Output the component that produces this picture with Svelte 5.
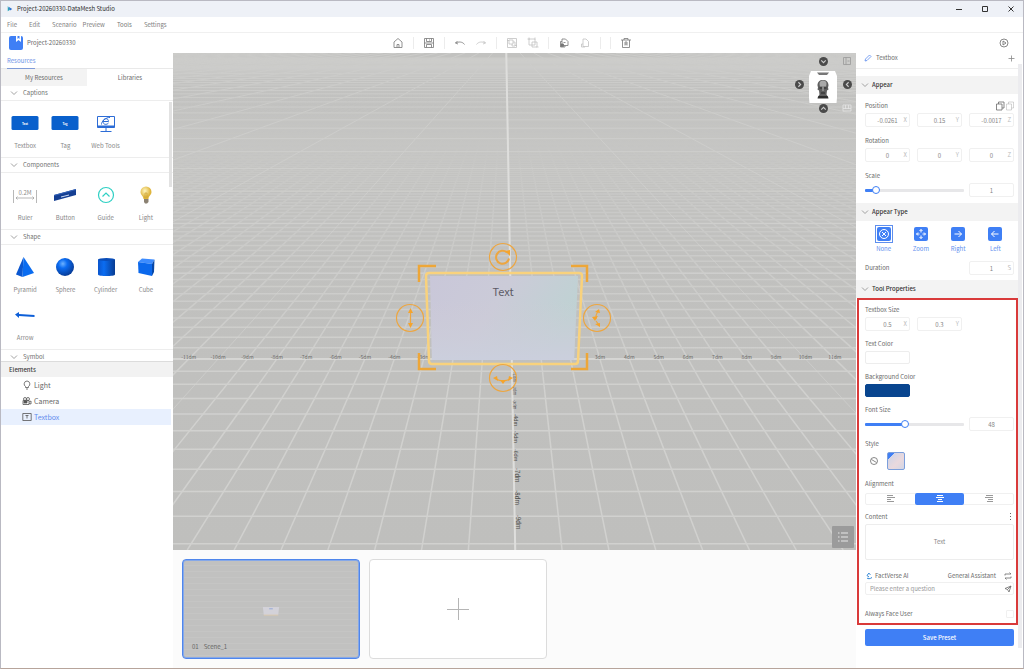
<script>
    const menus = ["File", "Edit", "Scenario", "Preview", "Tools", "Settings"];

    const sections = [
        { name: "Captions", items: ["Textbox", "Tag", "Web Tools"] },
        { name: "Components", items: ["Ruler", "Button", "Guide", "Light"] },
        {
            name: "Shape",
            items: ["Pyramid", "Sphere", "Cylinder", "Cube", "Arrow"],
        },
        { name: "Symbol", items: [] },
    ];

    const tools = [
        { id: "home", title: "Home" },
        { id: "sep" },
        { id: "save", title: "Save" },
        { id: "sep" },
        { id: "undo", title: "Undo" },
        { id: "redo", title: "Redo", off: true },
        { id: "sep" },
        { id: "group", title: "Group", off: true },
        { id: "ungroup", title: "Ungroup", off: true },
        { id: "sep" },
        { id: "copy", title: "Copy" },
        { id: "paste", title: "Paste", off: true },
        { id: "sep" },
        { id: "sep" },
        { id: "trash", title: "Delete" },
    ];

    let s = $state({
        tab: "Libraries",
        element: "Textbox",
        appear: "None",
        align: "center",
        scale: 8,
        font: 40,
        content: "Text",
        face: false,
    });

    // floor grid, everything runs to one vanishing point
    const vx = 333;
    const vy = -15;
    const step = 0.0915;
    const rowY = (n) => vy + 1 / (0.003115 + 0.0001138 * n);
    const colX = (n, y) => vx + (y - vy) * (0.018 + step * n);

    const minorRows = [];
    for (let n = -10; n < 90; n++) minorRows.push(rowY(n));
    const majorRows = [];
    for (let n = 0; n < 420; n += 10) majorRows.push(rowY(n));
    const minorCols = [];
    for (let n = -70; n <= 70; n++) if (n % 10) minorCols.push(n);
    const majorCols = [];
    for (let n = -300; n <= 300; n += 10) majorCols.push(n);

    const xLabels = [];
    for (let n = -11; n <= 11; n++) {
        if (Math.abs(n) > 2) xLabels.push({ n, x: colX(n, 306) });
    }
    const zLabels = [1, 2, 3, 4, 5, 6, 7, 8, 9].map((n) => ({
        n,
        x: colX(0, rowY(-n)) + 1,
        y: rowY(-n) + 6,
        size: n < 4 ? 4 : n < 7 ? 5 : 6,
    }));
</script>

{#snippet Chevron()}
    <svg class="chev" viewBox="0 0 8 8"><path d="M1 2.5 4 5.5 7 2.5" /></svg>
{/snippet}

{#snippet ToolIcon(id)}
    <svg class="line" viewBox="0 0 12 12">
        {#if id === "home"}
            <path d="M2 5 6 1.5 10 5v5.5H2zM5 10.500V7.500h2v3" />
        {:else if id === "save"}
            <path
                d="M1.500 1.500h9v9h-9zM3.500 1.500v3h5v-3M3.500 10.500v-3h5v3M6.500 2.500v1M1.500 6h9"
            />
        {:else if id === "undo"}
            <path d="M3.500 4 1.500 6l2.500 1M1.500 6C4.500 4.500 8.500 4.500 10.500 7.500" />
        {:else if id === "redo"}
            <path d="M8.500 4l2 2-2.500 1M10.500 6C7.500 4.500 3.500 4.500 1.500 7.500" />
        {:else if id === "group"}
            <path
                d="M1.500 1.500h9v9h-9zM3 3h4v4H3zM6 7v2h3V5H7M1 3.500h2M9 8.500h2"
            />
        {:else if id === "ungroup"}
            <path d="M2 2h6v6H2zM5 5h5v5H5zM.5 2h2M2 .5v2M8 .5v2M11.500 10h-2" />
        {:else if id === "copy"}
            <path d="M4 2h3.500l2.500 2.500V8.500H4zM4 4.500H2.500v5.500h4.500V8.500M5.500 5.500h2" />
            <path d="M3 7h2.500v2.500H3z" fill="currentColor" />
        {:else if id === "paste"}
            <path d="M4 2h3l2.500 2.500V9.500H4zM4 7H2.500v3h3.500" />
        {:else if id === "trash"}
            <path
                d="M1 3h10M4 3V1.500h4V3M2.500 3v7.500h7V3M5 5v3.500M7 5v3.500M5 5h2M5 7h2"
            />
        {/if}
    </svg>
{/snippet}

{#snippet Thing(name)}
    <svg class="thing" viewBox="0 0 28 24">
        {#if name === "Textbox" || name === "Tag"}
            <rect x=".5" y="5" width="27" height="14" rx="1.500" fill="#0960cc" />
            <text class="mini" x="14" y="13.500" text-anchor="middle"
                >{name === "Tag" ? "Tag" : "Text"}</text
            >
        {:else if name === "Web Tools"}
            <g fill="none" stroke="#2c6cd6">
                <path d="M5.500 5.500h17v11h-17z" />
                <path d="M5.500 15.500h17" stroke-width="2" />
                <path d="M14 17v3M8.500 20.500h11" />
                <path d="M11 10.500h5.500c0-4-5.500-3.500-5.500 0 0 3.500 4 3.500 5.500 1.500M9.500 13.500C9 11 14 6 18 6.500" />
            </g>
        {:else if name === "Ruler"}
            <g fill="none" stroke="#9a9a9a" stroke-width=".7">
                <path d="M2.500 7v13M25.500 7v13" />
                <path d="M5 15h18M6.500 13.500 5 15l1.500 1.500M21.500 13.500 23 15l-1.500 1.500" />
            </g>
            <text class="ruler" x="14" y="12" text-anchor="middle">0.2M</text>
        {:else if name === "Button"}
            <path d="M3 12 25 6v6L3 18z" fill="#153f93" />
            <path d="M3 12 25 6v1L3 13z" fill="#3463b8" />
            <path d="m10 14 8-2" stroke="#cfdcf4" />
        {:else if name === "Guide"}
            <g fill="none" stroke="#2fd0c4" stroke-width="1.200">
                <circle cx="14" cy="12" r="7.500" />
                <path d="m10.500 13.500 3.500-3.500 3.500 3.500" />
            </g>
        {:else if name === "Light"}
            <defs>
                <radialGradient id="bulb" cx=".4" cy=".35">
                    <stop offset="0" stop-color="#fff6c0" />
                    <stop offset="1" stop-color="#dfb53d" />
                </radialGradient>
            </defs>
            <path
                d="M14 3.500a5.500 5.500 0 0 1 5.500 5.500c0 3-3 4-3 7h-5c0-3-3-4-3-7A5.500 5.500 0 0 1 14 3.500z"
                fill="url(#bulb)"
            />
            <path d="M12 16h4.500v3L15 20.500h-2L12 19z" fill="#8b8172" />
            <path d="M13 15v-5l2 0v5" fill="none" stroke="#c79a2c" stroke-width=".6" />
        {:else if name === "Pyramid"}
            <path d="M12.500 2 5 19.500l6.500 2.500z" fill="#0b57d0" />
            <path d="M12.500 2 11.500 22 23 18z" fill="#0a6cf0" />
        {:else if name === "Sphere"}
            <defs>
                <radialGradient id="ball" cx=".38" cy=".32" r=".7">
                    <stop offset="0" stop-color="#6db2ff" />
                    <stop offset=".35" stop-color="#0b6cf2" />
                    <stop offset="1" stop-color="#073a94" />
                </radialGradient>
            </defs>
            <circle cx="14" cy="12" r="9" fill="url(#ball)" />
        {:else if name === "Cylinder"}
            <defs>
                <linearGradient id="tube">
                    <stop offset="0" stop-color="#0a55cc" />
                    <stop offset=".35" stop-color="#0b6df2" />
                    <stop offset="1" stop-color="#083c92" />
                </linearGradient>
            </defs>
            <path d="M6 4.500v15c0 2 17 2 17 0v-15z" fill="url(#tube)" />
            <ellipse cx="14.500" cy="4.500" rx="8.500" ry="1.500" fill="#0a4db8" />
        {:else if name === "Cube"}
            <path d="M6 7 10 3.500 22.500 4.500 20 9z" fill="#3d8cff" />
            <path d="M6 7 20 9v12L6.500 18z" fill="#0b68ec" />
            <path d="M20 9 22.500 4.500 22 17l-2 4z" fill="#0747a8" />
        {:else if name === "Arrow"}
            <path d="m4 11.500 4-2.500v2l15.500 1v2L8 13v2z" fill="#0d5fd8" />
        {/if}
    </svg>
{/snippet}

{#snippet Field(label, value, unit)}
    <label class="field">
        <input type="text" {value} aria-label={label} />
        {#if unit}<span>{unit}</span>{/if}
    </label>
{/snippet}

<div class="window">
    <header class="titlebar">
        <svg class="logo" viewBox="0 0 8 8">
            <path d="M1 0v7l3-2z" fill="#2aa5b8" />
            <path d="m2 1 5 3-3 2z" fill="#2c6fd0" />
        </svg>
        <h1>Project-20260330-DataMesh Studio</h1>
        <div class="winbtns">
            <button aria-label="Minimize"
                ><svg viewBox="0 0 8 8"><path d="M1 4.500h6" /></svg></button
            >
            <button aria-label="Maximize"
                ><svg viewBox="0 0 8 8"><path d="M1.500 1.500h5v5h-5z" /></svg
                ></button
            >
            <button aria-label="Close"
                ><svg viewBox="0 0 8 8"><path d="m1.500 1.500 5 5m0-5-5 5" /></svg
                ></button
            >
        </div>
    </header>

    <nav class="menubar">
        {#each menus as m}
            <button class={m.toLowerCase()}>{m}</button>
        {/each}
    </nav>

    <div class="toolbar">
        <div class="project">
            <svg viewBox="0 0 14 14">
                <rect width="14" height="14" rx="2" fill="#3f7ff5" />
                <path d="M7 0v6l2.500-2L12 6V0z" fill="#fff" />
                <path d="M8.500 0v3l1-1 1 1V0z" fill="#3f7ff5" />
            </svg>
            <span>Project-20260330</span>
        </div>
        <div class="tools">
            {#each tools as t}
                {#if t.id === "sep"}
                    <i></i>
                {:else}
                    <button class:off={t.off} aria-label={t.title}
                        >{@render ToolIcon(t.id)}</button
                    >
                {/if}
            {/each}
        </div>
        <button class="play" aria-label="Play">
            <svg class="line" viewBox="0 0 12 12">
                <circle cx="6" cy="6" r="4" />
                <path d="M5 4v4l3-2z" />
            </svg>
        </button>
    </div>

    <div class="body">
        <aside class="left">
            <section class="resources">
                <h2><span>Resources</span></h2>
                <div class="tabs">
                    {#each ["My Resources", "Libraries"] as t}
                        <button
                            class:on={s.tab === t}
                            onclick={() => (s.tab = t)}>{t}</button
                        >
                    {/each}
                </div>
                <div class="list">
                    {#each sections as sec}
                        <h3>{@render Chevron()}{sec.name}</h3>
                        {#if sec.items.length}
                            <ul>
                                {#each sec.items as name}
                                    <li>{@render Thing(name)}{name}</li>
                                {/each}
                            </ul>
                        {/if}
                    {/each}
                    <div class="thumb"></div>
                </div>
            </section>
            <section class="elements">
                <h2>Elements</h2>
                {#each ["Light", "Camera", "Textbox"] as name}
                    <button
                        class:on={s.element === name}
                        onclick={() => (s.element = name)}
                    >
                        <svg class="line" viewBox="0 0 10 10">
                            {#if name === "Light"}
                                <path
                                    d="M5 1a3 3 0 0 1 1.500 5.500v1h-3v-1A3 3 0 0 1 5 1zM4 9h2"
                                />
                            {:else if name === "Camera"}
                                <path d="M1 4.500h6v4H1zM7 6l2-1v3L7 7.500" />
                                <circle cx="3" cy="3" r="1.500" />
                                <circle cx="6" cy="3" r="1.500" />
                                <path d="M2 5h3v2H2z" fill="currentColor" />
                            {:else}
                                <path d="M.8 1.500h8.400v7H.8zM3.500 3.500h3M5 3.500v3" />
                            {/if}
                        </svg>
                        {name}
                    </button>
                {/each}
            </section>
        </aside>

        <main>
            <div class="stage">
                <svg
                    class="scene"
                    viewBox="0 0 683 497"
                    preserveAspectRatio="xMidYMid slice"
                >
                    <defs>
                        <linearGradient id="fade" x2="0" y2="1">
                            <stop offset="0.080" stop-color="#000" />
                            <stop offset="0.250" stop-color="#777" />
                            <stop offset="0.500" stop-color="#bbb" />
                            <stop offset="0.700" stop-color="#fff" />
                        </linearGradient>
                        <mask id="far"
                            ><rect width="683" height="497" fill="url(#fade)" /></mask
                        >
                        <linearGradient id="sky" x2="0" y2="1">
                            <stop offset="0" stop-color="#c2c2c0" />
                            <stop offset="1" stop-color="#bfbfbd" />
                        </linearGradient>
                        <linearGradient id="glass" x2="1" y2="0.350">
                            <stop offset="0" stop-color="#c9c7d9" />
                            <stop offset=".5" stop-color="#cbcbd8" />
                            <stop offset="1" stop-color="#bfd2d3" />
                        </linearGradient>
                        <linearGradient id="glow" x2="0" y2="1">
                            <stop offset=".3" stop-color="#cfcbd6" stop-opacity="0" />
                            <stop offset="1" stop-color="#cbcfdd" />
                        </linearGradient>
                    </defs>
                    <rect width="683" height="497" fill="url(#sky)" />
                    <g class="grid" mask="url(#far)">
                        {#each minorRows as y}
                            <path d="M0 {y}H683" />
                        {/each}
                        {#each minorCols as n}
                            <path d="M{colX(n, 0)} 0L{colX(n, 497)} 497" />
                        {/each}
                    </g>
                    <g class="grid major">
                        {#each majorRows as y}
                            <path d="M0 {y}H683" />
                        {/each}
                        {#each majorCols as n}
                            <path d="M{colX(n, 0)} 0L{colX(n, 497)} 497" />
                        {/each}
                    </g>
                    <path class="axis" d="M0 306H683" />
                    <path class="axis z" d="M{colX(0, 0)} 0L{colX(0, 497)} 497" />

                    {#each xLabels as l}
                        <text class="tick" x={l.x} y="306" text-anchor="middle"
                            >{l.n}dm</text
                        >
                    {/each}
                    {#each zLabels as l}
                        <text
                            class="tick z"
                            font-size={l.size}
                            transform="translate({l.x} {l.y}) rotate(90)"
                            text-anchor="middle">-{l.n}dm</text
                        >
                    {/each}

                    <path d="M257 223h148l-4 84H259z" fill="url(#glass)" />
                    <path d="M257 223h148l-4 84H259z" fill="url(#glow)" />
                    <path
                        class="frame"
                        d="M256 220h150q3 0 3 3l-4 85q0 3-3 3H259q-3 0-3-3l-3-85q0-3 3-3z"
                    />
                    <text class="label" x="330" y="243" text-anchor="middle"
                        >Text</text
                    >
                    <path
                        class="corner"
                        d="M246 229v-16h17M398 213h16v16M414 300v16h-16M263 316h-17v-16"
                    />
                    <g class="handle">
                        <circle cx="330" cy="204" r="13.500" />
                        <path
                            class="thick"
                            d="M334 199.500a6.500 6.500 0 1 0 2 6"
                        />
                        <path class="tip" d="m332 198 5-1v6z" />
                        <circle cx="237" cy="265" r="13.500" />
                        <path d="M237.500 257v16" />
                        <path class="tip" d="m235 260 2.500-5 2.500 5zM235 270l2.500 5 2.500-5z" />
                        <circle cx="424" cy="265" r="13.500" />
                        <path d="M425 258c-2 3-2.500 5-2 8M423 268l3 4" />
                        <path class="tip" d="m422 259 4-3 1 4zM419 264l6-1-3 5zM422 271l5-1 0 4z" />
                        <circle cx="330" cy="325" r="13.500" />
                        <path d="M323 326c4 2.500 10 2.500 14 0" />
                        <path class="tip" d="m320 325 4-2 1 5zM340 325l-4-2-1 5zM327 327h6l-3 4z" />
                    </g>
                </svg>

                <div class="gizmo">
                    <button class="dot top" aria-label="View from top">
                        <svg viewBox="0 0 8 8"><path d="m2 3 2 2 2-2" /></svg>
                    </button>
                    <button class="flat" aria-label="Perspective">
                        <svg viewBox="0 0 10 10"
                            ><path d="M1.500 1.500h7v7h-7zM4 1.500v7M5.500 5h2" /></svg
                        >
                    </button>
                    <button class="dot" aria-label="View from left">
                        <svg viewBox="0 0 8 8"><path d="m3 2 2 2-2 2" /></svg>
                    </button>
                    <svg class="cube" viewBox="0 0 28 32">
                        <path d="M0 5 2 0h24l2 5v22l-.5 5H.5L0 27z" fill="#fff" />
                        <path d="M8 1.500h12l-2 2.500h-8z" fill="#777" />
                        <path
                            d="M14 9c3.500 0 5.500 2 5.500 5.500l-.5 2 .5 2-1.500 1-.5 4 2 3h-11l2-3-.5-4-1.500-1 .5-2-.5-2C8.500 11 10.500 9 14 9z"
                            fill="#5f5f5f"
                        />
                        <path d="M14 9.500c2.500 0 3.500 1.500 3.500 3.500l-.5 2.500h-6l-.5-2.500c0-2 1-3.500 3.500-3.500z" fill="#a9a9a9" />
                        <path d="M10.500 17h2.500M15 17h2.500M12 22h4" stroke="#2b2b2b" />
                        <path d="M13.500 15.500h1v4.500h-1z" fill="#b3b3b3" />
                        <path d="M9.500 25h9l1 2.500h-11z" fill="#2e2e2e" />
                    </svg>
                    <button class="dot" aria-label="View from right">
                        <svg viewBox="0 0 8 8"><path d="M5 2 3 4l2 2" /></svg>
                    </button>
                    <button class="dot bottom" aria-label="View from below">
                        <svg viewBox="0 0 8 8"><path d="m2 5 2-2 2 2" /></svg>
                    </button>
                    <button class="flat light" aria-label="Grid">
                        <svg viewBox="0 0 10 10"
                            ><path d="M1 2h8v6H1zM3.500 2v4M6.500 2v4M1 5.500h8" /></svg
                        >
                    </button>
                </div>

                <button class="listbtn" aria-label="Scene list">
                    <svg viewBox="0 0 12 12"
                        ><path
                            d="M1 2h1.500M4 2h7M1 6h1.500M4 6h7M1 10h1.500M4 10h7"
                        /></svg
                    >
                </button>
            </div>

            <div class="scenes">
                <button class="card on">
                    <svg viewBox="0 0 20 12">
                        <path d="M1 1h18l-1 9H2z" fill="#d3d2d9" />
                        <path d="M2 10h16" stroke="#dcc9ad" />
                        <path d="M8 3h4" stroke="#8fa5d6" />
                    </svg>
                    <span>01</span>
                    <span>Scene_1</span>
                </button>
                <button class="card add" aria-label="Add scene">
                    <svg viewBox="0 0 24 24"
                        ><path d="M12.500 1v22M1 12.500h22" /></svg
                    >
                </button>
            </div>
        </main>

        <aside class="right">
            <div class="props">
                <div class="name">
                    <svg class="line" viewBox="0 0 8 8"
                        ><path d="m1 7 .5-2L5.500 1 7 2.500 3 6.500z" /></svg
                    >
                    <span>Textbox</span>
                    <button aria-label="Add">
                        <svg class="line" viewBox="0 0 8 8"
                            ><path d="M4.500 1.500v6M1.500 4.500h6" /></svg
                        >
                    </button>
                </div>

                <h3>{@render Chevron()}Appear</h3>
                <div class="block">
                    <h4>
                        Position
                        <svg class="line pair" viewBox="0 0 18 10">
                            <path d="M.5 3h5.500v6H.5zM2.500 3V1H8v6H6" />
                            <path d="M10.500 3h5v6h-5zM12.500 3V1h5v6h-2" opacity=".35" />
                        </svg>
                    </h4>
                    <div class="three">
                        {@render Field("Position X", "-0.0261", "X")}
                        {@render Field("Position Y", "0.15", "Y")}
                        {@render Field("Position Z", "-0.0017", "Z")}
                    </div>
                    <h4>Rotation</h4>
                    <div class="three">
                        {@render Field("Rotation X", "0", "X")}
                        {@render Field("Rotation Y", "0", "Y")}
                        {@render Field("Rotation Z", "0", "Z")}
                    </div>
                    <h4><label for="scale">Scale</label></h4>
                    <div class="slide">
                        <input
                            id="scale"
                            type="range"
                            bind:value={s.scale}
                            style="--v: {s.scale}%"
                        />
                        {@render Field("Scale value", "1", "")}
                    </div>
                </div>

                <h3>{@render Chevron()}Appear Type</h3>
                <div class="types">
                    {#each ["None", "Zoom", "Right", "Left"] as t}
                        <button
                            class:on={s.appear === t}
                            onclick={() => (s.appear = t)}
                        >
                            <svg viewBox="0 0 14 14">
                                <rect
                                    width="14"
                                    height="14"
                                    rx="2"
                                    fill="#3f7ff5"
                                    stroke="none"
                                />
                                {#if t === "None"}
                                    <circle cx="7" cy="7" r="4.500" />
                                    <path d="m5 5 4 4M9 5 5 9" />
                                {:else if t === "Zoom"}
                                    <path
                                        d="M7 2.500v3M7 8.500v3M2.500 7h3M8.500 7h3M5.500 4 7 2.500 8.500 4M5.500 10 7 11.500 8.500 10M4 5.500 2.500 7 4 8.500M10 5.500 11.500 7 10 8.500"
                                    />
                                {:else if t === "Right"}
                                    <path d="M3.500 7h7M7.500 4 10.500 7l-3 3" />
                                {:else}
                                    <path d="M10.500 7h-7M6.500 4 3.500 7l3 3" />
                                {/if}
                            </svg>
                            {t}
                        </button>
                    {/each}
                </div>
                <div class="duration">
                    <span>Duration</span>
                    {@render Field("Duration", "1", "S")}
                </div>

                <h3>{@render Chevron()}Tool Properties</h3>
                <div class="block toolprops">
                    <h4>Textbox Size</h4>
                    <div class="three">
                        {@render Field("Textbox width", "0.5", "X")}
                        {@render Field("Textbox height", "0.3", "Y")}
                    </div>
                    <h4>Text Color</h4>
                    <button class="swatch" aria-label="Text color"></button>
                    <h4>Background Color</h4>
                    <button class="swatch navy" aria-label="Background color"
                    ></button>
                    <h4><label for="font">Font Size</label></h4>
                    <div class="slide">
                        <input
                            id="font"
                            type="range"
                            bind:value={s.font}
                            style="--v: {s.font}%"
                        />
                        {@render Field("Font size value", "48", "")}
                    </div>
                    <h4>Style</h4>
                    <div class="styles">
                        <button class="none" aria-label="No style">
                            <svg class="line" viewBox="0 0 10 10">
                                <circle cx="5" cy="5" r="3.500" />
                                <path d="m2.500 3.500 5 3" />
                            </svg>
                        </button>
                        <button class="pearl" aria-label="Pearl style"></button>
                    </div>
                    <h4>Alignment</h4>
                    <div class="align">
                        {#each ["left", "center", "right"] as a}
                            <button
                                class:on={s.align === a}
                                aria-label="Align {a}"
                                onclick={() => (s.align = a)}
                            >
                                <svg viewBox="0 0 8 8">
                                    {#if a === "left"}
                                        <path d="M0 .5h6M0 2.500h8M0 4.500h4M0 6.500h7" />
                                    {:else if a === "center"}
                                        <path d="M1 .5h6M0 2.500h8M2 4.500h4M1 6.500h6" />
                                    {:else}
                                        <path d="M1 .5h7M0 2.500h8M3 4.500h5M2 6.500h6" />
                                    {/if}
                                </svg>
                            </button>
                        {/each}
                    </div>
                    <h4>
                        <label for="content">Content</label>
                        <button class="more" aria-label="More">
                            <svg viewBox="0 0 8 8"
                                ><path d="M4 0h1v1H4zM4 3h1v1H4zM4 6h1v1H4z" /></svg
                            >
                        </button>
                    </h4>
                    <textarea id="content" bind:value={s.content}></textarea>
                    <div class="ai">
                        <svg viewBox="0 0 8 8">
                            <path
                                d="M4 1 2 3.500 4 5M2 6c1 1 3 1 5-.5M4 1.500l1.500 1"
                                fill="none"
                                stroke="#2f86d6"
                            />
                        </svg>
                        <span>FactVerse AI</span>
                        <span class="who">General Assistant</span>
                        <svg class="line" viewBox="0 0 8 8"
                            ><path d="M1 3.500V2h6L5.500.5M7 4.500V6H1l1.500 1.500" /></svg
                        >
                    </div>
                    <div class="ask">
                        <input
                            type="text"
                            placeholder="Please enter a question"
                            aria-label="Question"
                        />
                        <button aria-label="Send">
                            <svg class="line" viewBox="0 0 8 8"
                                ><path d="M1 3.500 7 1 5 7 3.500 4.500zM3.500 4.500 7 1" /></svg
                            >
                        </button>
                    </div>
                    <label class="face">
                        Always Face User
                        <input type="checkbox" bind:checked={s.face} />
                    </label>
                    <div class="callout"></div>
                </div>
                <button class="preset">Save Preset</button>
            </div>
            <div class="scroll"></div>
        </aside>
    </div>
</div>

<style>
    :global(body) {
        background: #fff;
    }

    .window,
    .window :global(*) {
        box-sizing: border-box;
    }
    .window {
        display: flex;
        flex-direction: column;
        height: 100vh;
        min-height: 660px;
        border: 1px solid #b9b9c2;
        border-bottom-color: #b7a49b;
        background: #fff;
        color: #6a6a6a;
        font-family: "Noto Sans CJK SC", "Noto Sans", sans-serif;
        font-size: 6px;
        line-height: 10px;
    }
    button,
    input,
    textarea {
        font: inherit;
        color: inherit;
        margin: 0;
        padding: 0;
        border: 0;
        background: none;
        min-width: 0;
    }
    button {
        cursor: pointer;
    }
    h1,
    h2,
    h3,
    h4,
    ul {
        margin: 0;
        padding: 0;
        font-size: inherit;
        font-weight: 400;
        list-style: none;
    }
    svg {
        display: block;
        flex: none;
    }
    .line,
    .chev {
        fill: none;
        stroke: currentColor;
        stroke-width: 0.8;
    }
    .chev {
        width: 8px;
        height: 8px;
        color: #8a8a8a;
    }

    .titlebar {
        display: flex;
        align-items: center;
        height: 16px;
        flex: none;
        padding-left: 6px;
        background: #eef1f7;
        color: #2d2d2d;
        h1 {
            flex: 1;
            padding-left: 4px;
        }
    }
    .logo {
        width: 6px;
        height: 6px;
    }
    .winbtns {
        display: flex;
        gap: 18px;
        padding-right: 8px;
        svg {
            width: 8px;
            height: 8px;
            fill: none;
            stroke: #333;
        }
    }

    .menubar {
        display: flex;
        align-items: center;
        height: 16px;
        flex: none;
        gap: 12px;
        padding-left: 6px;
        border-bottom: 1px solid #f0f0f0;
        color: #808080;
        .preview {
            margin-left: -6px;
        }
    }

    .toolbar {
        display: grid;
        grid-template-columns: 1fr auto 1fr;
        align-items: center;
        height: 20px;
        flex: none;
    }
    .project {
        display: flex;
        align-items: center;
        gap: 4px;
        padding-left: 8px;
        svg {
            width: 14px;
            height: 14px;
        }
    }
    .tools {
        display: flex;
        align-items: center;
        gap: 9px;
        color: #777;
        svg {
            width: 12px;
            height: 12px;
        }
        i {
            width: 1px;
            height: 12px;
            background: #ececec;
        }
        .off {
            opacity: 0.45;
        }
    }
    .play {
        justify-self: end;
        margin-right: 13px;
        svg {
            width: 12px;
            height: 12px;
        }
    }

    .body {
        display: flex;
        flex: 1;
        min-height: 0;
    }
    .left {
        width: 172px;
        flex: none;
        display: flex;
        flex-direction: column;
    }
    .resources,
    .elements {
        flex: 1 1 0;
        min-height: 0;
        display: flex;
        flex-direction: column;
    }
    .resources {
        h2 {
            height: 16px;
            flex: none;
            padding-left: 6px;
            border-bottom: 1px solid #e9e9e9;
            color: #6f93e6;
            line-height: 15px;
        }
        h2 span {
            display: inline-block;
            border-bottom: 1px solid #7f9bd8;
        }
        h3 {
            display: flex;
            align-items: center;
            gap: 5px;
            height: 15px;
            padding-left: 9px;
            border-bottom: 1px solid #ededed;
            color: #6f6f6f;
        }
        ul {
            display: grid;
            grid-template-columns: repeat(4, 1fr);
            padding: 8px 7px 0 4px;
            border-bottom: 1px solid #ededed;
        }
        li {
            display: flex;
            flex-direction: column;
            align-items: center;
            gap: 6px;
            height: 48px;
            padding-top: 2px;
            color: #888;
        }
    }
    .tabs {
        display: grid;
        grid-template-columns: 1fr 1fr;
        height: 17px;
        flex: none;
        button {
            background: #f3f3f3;
        }
        .on {
            background: #fff;
        }
    }
    .list {
        position: relative;
        flex: 1;
        min-height: 0;
        overflow: hidden;
    }
    .thumb {
        position: absolute;
        top: 16px;
        right: 1px;
        width: 3px;
        height: 85px;
        background: #e2e2e2;
    }
    .thing {
        width: 28px;
        height: 24px;
    }
    .mini {
        font-size: 3px;
        font-weight: 700;
        fill: #fff;
    }
    .ruler {
        font-size: 6px;
        fill: #8c8c8c;
    }

    .elements {
        font-size: 7px;
        h2 {
            height: 16px;
            padding-left: 8px;
            border-top: 1px solid #dcdcdc;
            background: #f2f2f2;
            color: #3c3c3c;
            font-size: 6px;
            font-weight: 500;
            line-height: 15px;
        }
        button {
            display: flex;
            align-items: center;
            gap: 2px;
            height: 16px;
            margin-right: 2px;
            padding-left: 21px;
            color: #666;
        }
        svg {
            width: 10px;
            height: 10px;
            color: #555;
        }
        .on {
            background: #e8f0fe;
            color: #5f8bee;
        }
    }

    main {
        flex: 1;
        min-width: 0;
        display: flex;
        flex-direction: column;
    }
    .stage {
        position: relative;
        flex: 1;
        min-height: 0;
        background: #c1c1bf;
    }
    .scene {
        width: 100%;
        height: 100%;
        position: absolute;
    }
    .grid {
        fill: none;
        stroke: #d1d1cf;
        stroke-width: 1.5;
    }
    .major {
        stroke: #d3d3d1;
        stroke-width: 1;
        opacity: 0.6;
    }
    .axis {
        stroke: #dededc;
        stroke-width: 1;
        &.z {
            stroke-width: 2;
        }
    }
    .tick {
        font-size: 5px;
        fill: #6b6b69;
        &.z {
            font-size: revert-layer;
            fill: #4c4c4a;
        }
    }
    .frame {
        fill: none;
        stroke: #f9d27c;
        stroke-width: 2.5;
    }
    .label {
        font-size: 11px;
        fill: #5c5b66;
    }
    .corner {
        fill: none;
        stroke: #eda638;
        stroke-width: 2.5;
    }
    .handle {
        fill: none;
        stroke: #eda640;
        stroke-width: 1.2;
        .thick {
            stroke-width: 2;
        }
        .tip {
            fill: #f5a42c;
            stroke: none;
        }
    }

    .gizmo {
        position: absolute;
        top: 3px;
        right: 4px;
        display: grid;
        grid-template-columns: 10px 30px 10px;
        grid-template-rows: 10px 37px 10px;
        column-gap: 4px;
        place-items: center;
    }
    .dot {
        width: 9px;
        height: 9px;
        border-radius: 50%;
        background: #4a4a4a;
        svg {
            width: 9px;
            height: 9px;
            fill: none;
            stroke: #ccc;
        }
    }
    .top,
    .bottom {
        grid-column: 2;
    }
    .flat {
        grid-column: 3;
        svg {
            width: 10px;
            height: 10px;
            fill: none;
            stroke: #999;
            stroke-width: 0.8;
        }
        &.light svg {
            stroke: #e4e4e4;
        }
    }
    .cube {
        align-self: end;
        width: 28px;
        height: 32px;
    }
    .listbtn {
        position: absolute;
        right: 2px;
        bottom: 2px;
        display: grid;
        place-items: center;
        width: 22px;
        height: 22px;
        border-radius: 1px;
        background: #9b9b9b;
        svg {
            width: 12px;
            height: 12px;
            fill: none;
            stroke: #e6e6e6;
        }
    }

    .scenes {
        display: flex;
        gap: 9px;
        height: 118px;
        flex: none;
        padding: 9px;
        background: #fbfbfb;
    }
    .card {
        width: 178px;
        height: 100px;
        border: 1px solid #dcdcdc;
        border-radius: 4px;
        background: #fff;
        &.on {
            display: grid;
            grid-template-columns: auto 1fr;
            grid-template-rows: 1fr 16px;
            align-items: center;
            column-gap: 5px;
            padding: 0 9px 3px;
            border: 1px solid #4f86ec;
            box-shadow: inset 0 0 0 1px #86a8e8;
            background: repeating-linear-gradient(#c1c1c0 0 5px, #c5c5c4 5px 6px);
            text-align: left;
            color: #666;
        }
        &.on svg {
            grid-column: 1 / 3;
            place-self: end center;
            width: 18px;
            height: 11px;
            margin-bottom: 22px;
        }
    }
    .add {
        display: grid;
        place-items: center;
        svg {
            width: 24px;
            height: 24px;
            stroke: #b5b5b5;
            fill: none;
        }
    }

    .right {
        display: flex;
        width: 167px;
        flex: none;
    }
    .props {
        flex: 1;
        min-width: 0;
        h3 {
            display: flex;
            align-items: center;
            gap: 3px;
            height: 18px;
            padding-left: 5px;
            background: #f3f3f3;
            color: #333;
            font-weight: 500;
        }
        h4 {
            display: flex;
            justify-content: space-between;
            align-items: center;
            height: 10px;
            margin-bottom: 2px;
        }
    }
    .scroll {
        width: 4px;
        margin: 11px 1px 20px 0;
        background: #ececef;
    }
    .name {
        display: flex;
        align-items: center;
        gap: 4px;
        height: 16px;
        margin-bottom: 7px;
        padding: 0 3px 6px 8px;
        border-bottom: 1px solid #eee;
        svg {
            width: 8px;
            height: 8px;
            color: #5b8cf0;
        }
        span {
            flex: 1;
        }
        button svg {
            color: #888;
        }
    }
    .block {
        padding: 7px 4px 0 9px;
    }
    .pair {
        width: 18px;
        height: 10px;
    }
    .three {
        display: grid;
        grid-template-columns: repeat(3, 1fr);
        gap: 7px;
        margin-bottom: 9px;
    }
    .field {
        position: relative;
        display: block;
        height: 14px;
        input {
            display: block;
            width: 100%;
            height: 14px;
            border: 1px solid #f0f0f0;
            border-radius: 2px;
            text-align: center;
            color: #858585;
        }
        span {
            position: absolute;
            right: 3px;
            top: 2px;
            color: #bbb;
        }
    }
    .slide {
        display: grid;
        grid-template-columns: 1fr 45px;
        align-items: center;
        gap: 5px;
        margin-bottom: 6px;
    }
    input[type="range"] {
        appearance: none;
        width: 100%;
        height: 3px;
        border-radius: 1px;
        background: linear-gradient(
            90deg,
            #3f7ff5 var(--v),
            #e7e7e9 var(--v)
        );
    }
    input[type="range"]::-webkit-slider-thumb {
        appearance: none;
        width: 8px;
        height: 8px;
        border: 1px solid #3f7ff5;
        border-radius: 50%;
        background: #fff;
    }
    .types {
        display: grid;
        grid-template-columns: repeat(4, 1fr);
        padding: 4px 4px 0 9px;
        button {
            display: flex;
            flex-direction: column;
            align-items: center;
            gap: 1px;
            color: #5f8fee;
        }
        svg {
            box-sizing: content-box;
            width: 14px;
            height: 14px;
            padding: 1px;
            border: 1px solid transparent;
            fill: none;
            stroke: #fff;
        }
        .on svg {
            border-color: #5f8fee;
        }
    }
    .duration {
        display: grid;
        grid-template-columns: 1fr 45px;
        align-items: center;
        padding: 7px 4px 5px 9px;
    }

    .toolprops {
        position: relative;
        padding-bottom: 6px;
        .three,
        .slide {
            margin-bottom: 8px;
        }
    }
    .callout {
        position: absolute;
        inset: 0 0 0 1px;
        border: 2px solid #d93a3a;
        pointer-events: none;
    }
    .swatch {
        display: block;
        width: 45px;
        height: 13px;
        margin-bottom: 8px;
        border: 1px solid #ededed;
        border-radius: 2px;
        &.navy {
            border-color: #08458f;
            background: #08458f;
        }
    }
    .styles {
        display: flex;
        align-items: center;
        gap: 8px;
        height: 20px;
        margin-bottom: 8px;
        padding-left: 4px;
        svg {
            width: 10px;
            height: 10px;
        }
    }
    .pearl {
        width: 18px;
        height: 18px;
        border: 1px solid #7c9fdc;
        border-radius: 2px;
        background: linear-gradient(135deg, #3f7ff5 20%, #d3d5e6 20%, #ead9dd 60%, #d2d6e6);
    }
    .align {
        display: grid;
        grid-template-columns: repeat(3, 1fr);
        height: 12px;
        margin: 4px 0 7px;
        border: 1px solid #f0f0f0;
        border-radius: 2px;
        button {
            display: grid;
            place-items: center;
        }
        svg {
            width: 8px;
            height: 8px;
            stroke: #999;
        }
        .on {
            margin: -1px 0;
            border-radius: 2px;
            background: #3f7ff5;
        }
        .on svg {
            stroke: #fff;
        }
    }
    .more svg {
        width: 8px;
        height: 8px;
        fill: #666;
    }
    textarea {
        display: block;
        width: 100%;
        height: 36px;
        padding-top: 12px;
        border: 1px solid #ededed;
        border-radius: 2px;
        resize: none;
        overflow: hidden;
        text-align: center;
        color: #858585;
    }
    .ai {
        display: flex;
        align-items: center;
        gap: 2px;
        height: 12px;
        margin-top: 10px;
        padding-right: 2px;
        svg {
            width: 8px;
            height: 8px;
        }
        .who {
            margin: 0 6px 0 auto;
        }
    }
    .ask {
        display: flex;
        align-items: center;
        height: 13px;
        border: 1px solid #f0f0f0;
        border-radius: 2px;
        padding: 0 1px 0 4px;
        input {
            flex: 1;
        }
        input::placeholder {
            color: #999;
        }
        svg {
            width: 8px;
            height: 8px;
        }
    }
    .face {
        display: flex;
        justify-content: space-between;
        align-items: center;
        height: 10px;
        margin-top: 14px;
        input {
            appearance: none;
            width: 8px;
            height: 8px;
            border: 1px solid #f0f0f0;
            border-radius: 1px;
        }
        input:checked {
            background: #3f7ff5;
        }
    }
    .preset {
        display: block;
        width: calc(100% - 13px);
        height: 17px;
        margin: 4px 4px 0 9px;
        border-radius: 2px;
        background: #3f7ff5;
        color: #fff;
        font-weight: 500;
    }
</style>
